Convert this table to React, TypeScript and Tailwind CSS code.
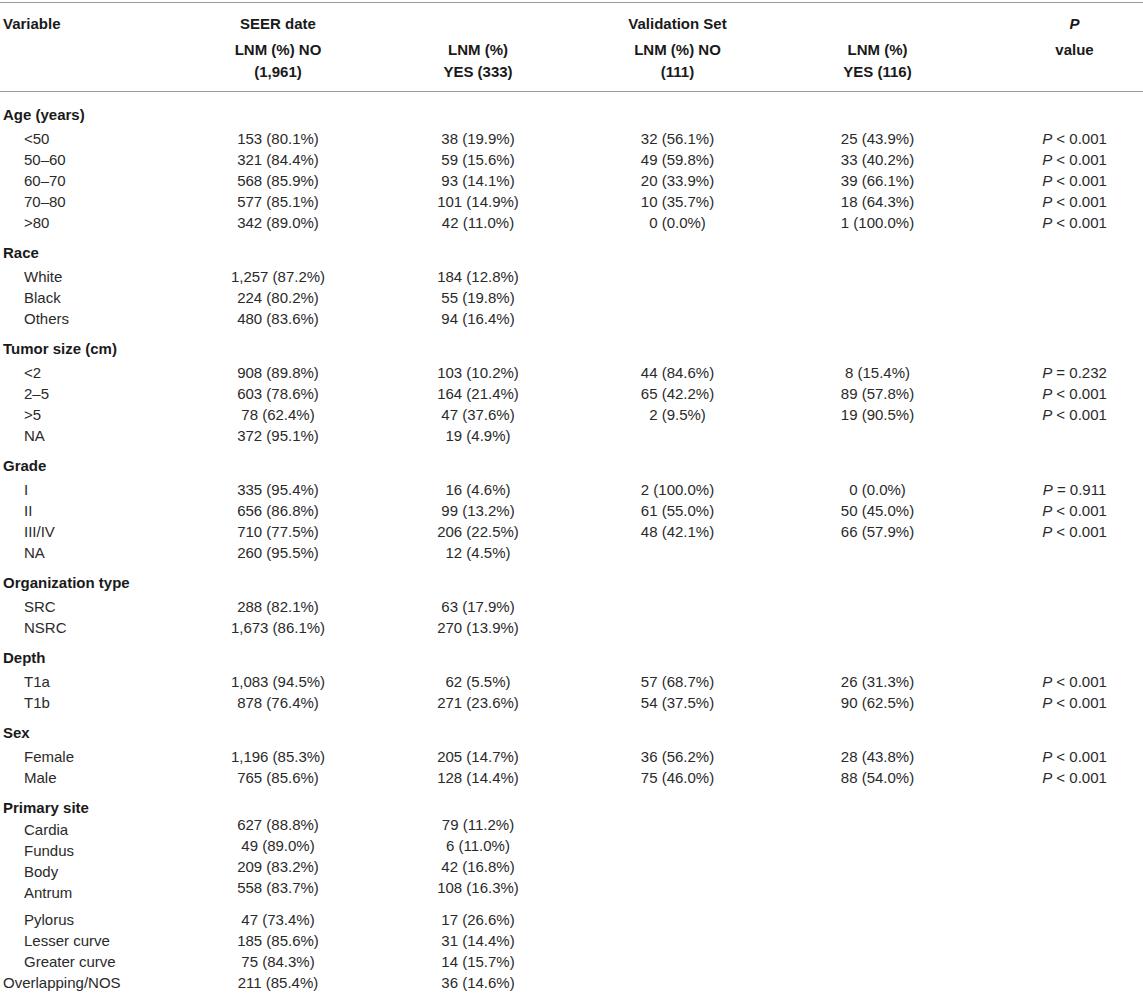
import React from 'react';

type Row = {
  label: string;
  cells: [string, string, string?, string?, string?];
  flush?: boolean;
  lowLabel?: boolean;
  gapBefore?: boolean;
};

type Section = {
  title: string;
  rows: Row[];
};

const lt = '<';
const eq = '=';

const sections: Section[] = [
  {
    title: 'Age (years)',
    rows: [
      { label: '<50', cells: ['153 (80.1%)', '38 (19.9%)', '32 (56.1%)', '25 (43.9%)', `${lt} 0.001`] },
      { label: '50–60', cells: ['321 (84.4%)', '59 (15.6%)', '49 (59.8%)', '33 (40.2%)', `${lt} 0.001`] },
      { label: '60–70', cells: ['568 (85.9%)', '93 (14.1%)', '20 (33.9%)', '39 (66.1%)', `${lt} 0.001`] },
      { label: '70–80', cells: ['577 (85.1%)', '101 (14.9%)', '10 (35.7%)', '18 (64.3%)', `${lt} 0.001`] },
      { label: '>80', cells: ['342 (89.0%)', '42 (11.0%)', '0 (0.0%)', '1 (100.0%)', `${lt} 0.001`] },
    ],
  },
  {
    title: 'Race',
    rows: [
      { label: 'White', cells: ['1,257 (87.2%)', '184 (12.8%)'] },
      { label: 'Black', cells: ['224 (80.2%)', '55 (19.8%)'] },
      { label: 'Others', cells: ['480 (83.6%)', '94 (16.4%)'] },
    ],
  },
  {
    title: 'Tumor size (cm)',
    rows: [
      { label: '<2', cells: ['908 (89.8%)', '103 (10.2%)', '44 (84.6%)', '8 (15.4%)', `${eq} 0.232`] },
      { label: '2–5', cells: ['603 (78.6%)', '164 (21.4%)', '65 (42.2%)', '89 (57.8%)', `${lt} 0.001`] },
      { label: '>5', cells: ['78 (62.4%)', '47 (37.6%)', '2 (9.5%)', '19 (90.5%)', `${lt} 0.001`] },
      { label: 'NA', cells: ['372 (95.1%)', '19 (4.9%)'] },
    ],
  },
  {
    title: 'Grade',
    rows: [
      { label: 'I', cells: ['335 (95.4%)', '16 (4.6%)', '2 (100.0%)', '0 (0.0%)', `${eq} 0.911`] },
      { label: 'II', cells: ['656 (86.8%)', '99 (13.2%)', '61 (55.0%)', '50 (45.0%)', `${lt} 0.001`] },
      { label: 'III/IV', cells: ['710 (77.5%)', '206 (22.5%)', '48 (42.1%)', '66 (57.9%)', `${lt} 0.001`] },
      { label: 'NA', cells: ['260 (95.5%)', '12 (4.5%)'] },
    ],
  },
  {
    title: 'Organization type',
    rows: [
      { label: 'SRC', cells: ['288 (82.1%)', '63 (17.9%)'] },
      { label: 'NSRC', cells: ['1,673 (86.1%)', '270 (13.9%)'] },
    ],
  },
  {
    title: 'Depth',
    rows: [
      { label: 'T1a', cells: ['1,083 (94.5%)', '62 (5.5%)', '57 (68.7%)', '26 (31.3%)', `${lt} 0.001`] },
      { label: 'T1b', cells: ['878 (76.4%)', '271 (23.6%)', '54 (37.5%)', '90 (62.5%)', `${lt} 0.001`] },
    ],
  },
  {
    title: 'Sex',
    rows: [
      { label: 'Female', cells: ['1,196 (85.3%)', '205 (14.7%)', '36 (56.2%)', '28 (43.8%)', `${lt} 0.001`] },
      { label: 'Male', cells: ['765 (85.6%)', '128 (14.4%)', '75 (46.0%)', '88 (54.0%)', `${lt} 0.001`] },
    ],
  },
  {
    title: 'Primary site',
    rows: [
      { label: 'Cardia', cells: ['627 (88.8%)', '79 (11.2%)'], lowLabel: true },
      { label: 'Fundus', cells: ['49 (89.0%)', '6 (11.0%)'], lowLabel: true },
      { label: 'Body', cells: ['209 (83.2%)', '42 (16.8%)'], lowLabel: true },
      { label: 'Antrum', cells: ['558 (83.7%)', '108 (16.3%)'], lowLabel: true },
      { label: 'Pylorus', cells: ['47 (73.4%)', '17 (26.6%)'], gapBefore: true },
      { label: 'Lesser curve', cells: ['185 (85.6%)', '31 (14.4%)'] },
      { label: 'Greater curve', cells: ['75 (84.3%)', '14 (15.7%)'] },
      { label: 'Overlapping/NOS', cells: ['211 (85.4%)', '36 (14.6%)'], flush: true },
    ],
  },
];

const grid = 'grid grid-cols-[178px_200px_200px_199px_201px_165px]';

function DataRow({ row }: { row: Row }) {
  const [a, b, c, d, p] = row.cells;
  // first rows of "Primary site" sit a little out of line in the source
  const shift = row.lowLabel ? '-translate-y-[7px]' : '';
  return (
    <div className={`${grid} h-[21px] leading-[21px] ${row.gapBefore ? 'mt-[4px]' : ''}`}>
      <span
        className={`${row.flush ? 'pl-[3px]' : 'pl-[24px]'} ${row.lowLabel ? '-translate-y-[2px]' : ''} whitespace-nowrap`}
      >
        {row.label}
      </span>
      <span className={`text-center ${shift}`}>{a}</span>
      <span className={`text-center ${shift}`}>{b}</span>
      <span className="text-center">{c ?? ''}</span>
      <span className="text-center">{d ?? ''}</span>
      <span className="pl-[28px] text-center">
        {p && (
          <>
            <i>P</i> {p}
          </>
        )}
      </span>
    </div>
  );
}

export default function App() {
  return (
    <div
      className="min-h-[994px] w-[1143px] bg-white text-[15px] text-[#2a2a2a]"
      style={{ fontFamily: '"Liberation Sans", Arial, sans-serif' }}
    >
      <div className="h-[2px]" />
      <div className="border-y border-[#9a9a9a] pb-[8px] pt-[10px] font-bold text-[#1a1a1a]">
        <div className={`${grid} leading-[22px]`}>
          <span className="pl-[3px]">Variable</span>
          <span className="text-center">SEER date</span>
          <span />
          <span className="text-center">Validation Set</span>
          <span />
          <span className="pl-[28px] text-center italic">P</span>
        </div>
        <div className={`${grid} mt-[4px] leading-[22px]`}>
          <span />
          <span className="text-center">
            LNM (%) NO
            <br />
            (1,961)
          </span>
          <span className="text-center">
            LNM (%)
            <br />
            YES (333)
          </span>
          <span className="text-center">
            LNM (%) NO
            <br />
            (111)
          </span>
          <span className="text-center">
            LNM (%)
            <br />
            YES (116)
          </span>
          <span className="pl-[28px] text-center">value</span>
        </div>
      </div>

      <div className="pt-[3px]">
        {sections.map((section) => (
          <div key={section.title} className="pt-[9px]">
            <div className="h-[21px] pl-[3px] font-bold leading-[21px] text-[#1a1a1a]">
              {section.title}
            </div>
            <div className="pt-[3px]">
              {section.rows.map((row, index) => (
                <DataRow key={`${section.title}-${index}`} row={row} />
              ))}
            </div>
          </div>
        ))}
      </div>
    </div>
  );
}
